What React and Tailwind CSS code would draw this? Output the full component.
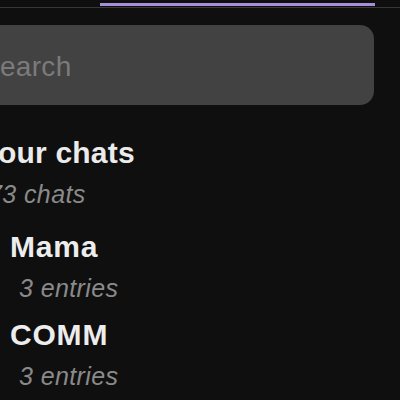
import React from 'react';

const chats = [
  { name: 'Mama', entries: 3 },
  { name: 'COMM', entries: 3 },
];

const App = () => {
  return (
    <div className="w-[400px] h-[400px] overflow-hidden bg-[#0f0f0f] font-['Liberation_Sans',Arial,sans-serif]">
      {/* tab indicator */}
      <div className="h-[7px] pt-[3px]">
        <div className="ml-[100px] w-[275px] h-[3px] bg-[#a48fd8]" />
      </div>
      <div className="h-px bg-[#383838]" />

      <div className="mt-[17px] ml-[-40px] w-[414px] h-[80px] rounded-[14px] bg-[#424242] flex items-center pl-[21px] pt-[3px]">
        <span className="text-[28px] leading-[32px] tracking-[0.3px] text-[#7b7b7b]">Search</span>
      </div>

      <div className="mt-[28px] ml-[-20px] mb-[13px]">
        <h2 className="text-[30px] leading-[40px] font-bold tracking-[0.2px] text-[#ebebeb]">Your chats</h2>
        <p className="mt-[1px] ml-[8px] text-[25px] leading-[40px] italic tracking-[0.4px] text-[#8a8a8a]">73 chats</p>
      </div>

      <div className="ml-[10px]">
        {chats.map((chat) => (
          <div key={chat.name} className="pb-[7px]">
            <div className="text-[30px] leading-[40px] font-bold tracking-[0.8px] text-[#ededed]">{chat.name}</div>
            <div className="mt-[1px] ml-[9px] text-[25px] leading-[40px] italic tracking-[0.4px] text-[#8a8a8a]">
              {chat.entries} entries
            </div>
          </div>
        ))}
      </div>
    </div>
  );
};

export default App;
